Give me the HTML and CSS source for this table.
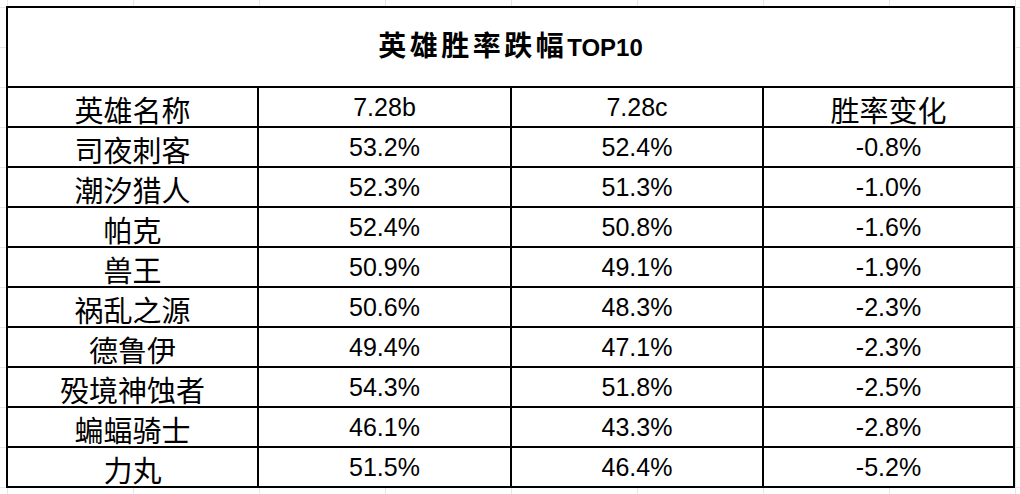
FILE: index.html
```html
<!DOCTYPE html>
<html lang="zh-CN">
<head>
<meta charset="utf-8">
<title>英雄胜率跌幅TOP10</title>
<link rel="stylesheet" href="styles.css">
</head>
<body>
<table class="sheet">
  <colgroup>
    <col class="c1"><col class="c2"><col class="c3"><col class="c4">
  </colgroup>
  <thead>
    <tr><td class="title" colspan="4">英雄胜率跌幅<span class="en">TOP10</span></td></tr>
    <tr><td class="cn">英雄名称</td><td>7.28b</td><td>7.28c</td><td class="cn">胜率变化</td></tr>
  </thead>
  <tbody>
    <tr><td class="cn">司夜刺客</td><td>53.2%</td><td>52.4%</td><td>-0.8%</td></tr>
    <tr><td class="cn">潮汐猎人</td><td>52.3%</td><td>51.3%</td><td>-1.0%</td></tr>
    <tr><td class="cn">帕克</td><td>52.4%</td><td>50.8%</td><td>-1.6%</td></tr>
    <tr><td class="cn">兽王</td><td>50.9%</td><td>49.1%</td><td>-1.9%</td></tr>
    <tr><td class="cn">祸乱之源</td><td>50.6%</td><td>48.3%</td><td>-2.3%</td></tr>
    <tr><td class="cn">德鲁伊</td><td>49.4%</td><td>47.1%</td><td>-2.3%</td></tr>
    <tr><td class="cn">殁境神蚀者</td><td>54.3%</td><td>51.8%</td><td>-2.5%</td></tr>
    <tr><td class="cn">蝙蝠骑士</td><td>46.1%</td><td>43.3%</td><td>-2.8%</td></tr>
    <tr><td class="cn">力丸</td><td>51.5%</td><td>46.4%</td><td>-5.2%</td></tr>
  </tbody>
</table>
</body>
</html>
```
FILE: styles.css
```css
html, body {
  margin: 0;
  padding: 0;
}
body {
  width: 1020px;
  height: 494px;
  overflow: hidden;
  background-color: #ffffff;
  background-image:
    repeating-linear-gradient(to right, transparent 0 7px, #e6e6e6 7px 8px, transparent 8px 126px),
    repeating-linear-gradient(to bottom, transparent 0 7px, #e6e6e6 7px 8px, transparent 8px 40px);
  padding: 6px 0 0 6px;
  box-sizing: border-box;
  color: #000;
}
.sheet {
  table-layout: fixed;
  width: 1009px;
  border-collapse: separate;
  border-spacing: 2px;
  background: #000;
}
.c1 { width: 249px; }
.c2 { width: 251px; }
.c3 { width: 250px; }
.c4 { width: 249px; }
.sheet td {
  background: #fff;
  padding: 0;
  height: 38px;
  line-height: 38px;
  vertical-align: top;
  text-align: center;
  white-space: nowrap;
  overflow: visible;
  font-family: "Liberation Sans", Arial, sans-serif;
  font-size: 25px;
}
.sheet td.cn {
  height: 34px;
  line-height: 34px;
  padding-top: 4px;
  font-family: "Noto Sans CJK SC", "Noto Sans", sans-serif;
  font-size: 29px;
}
.sheet td.title {
  height: 72px;
  line-height: 72px;
  padding-bottom: 6px;
  font-family: "Noto Sans CJK SC", sans-serif;
  font-size: 28px;
  font-weight: 700;
  letter-spacing: 3.5px;
}
.title .en {
  font-family: "Liberation Sans", Arial, sans-serif;
  font-size: 24px;
  letter-spacing: 0;
  line-height: 1;
}
```
